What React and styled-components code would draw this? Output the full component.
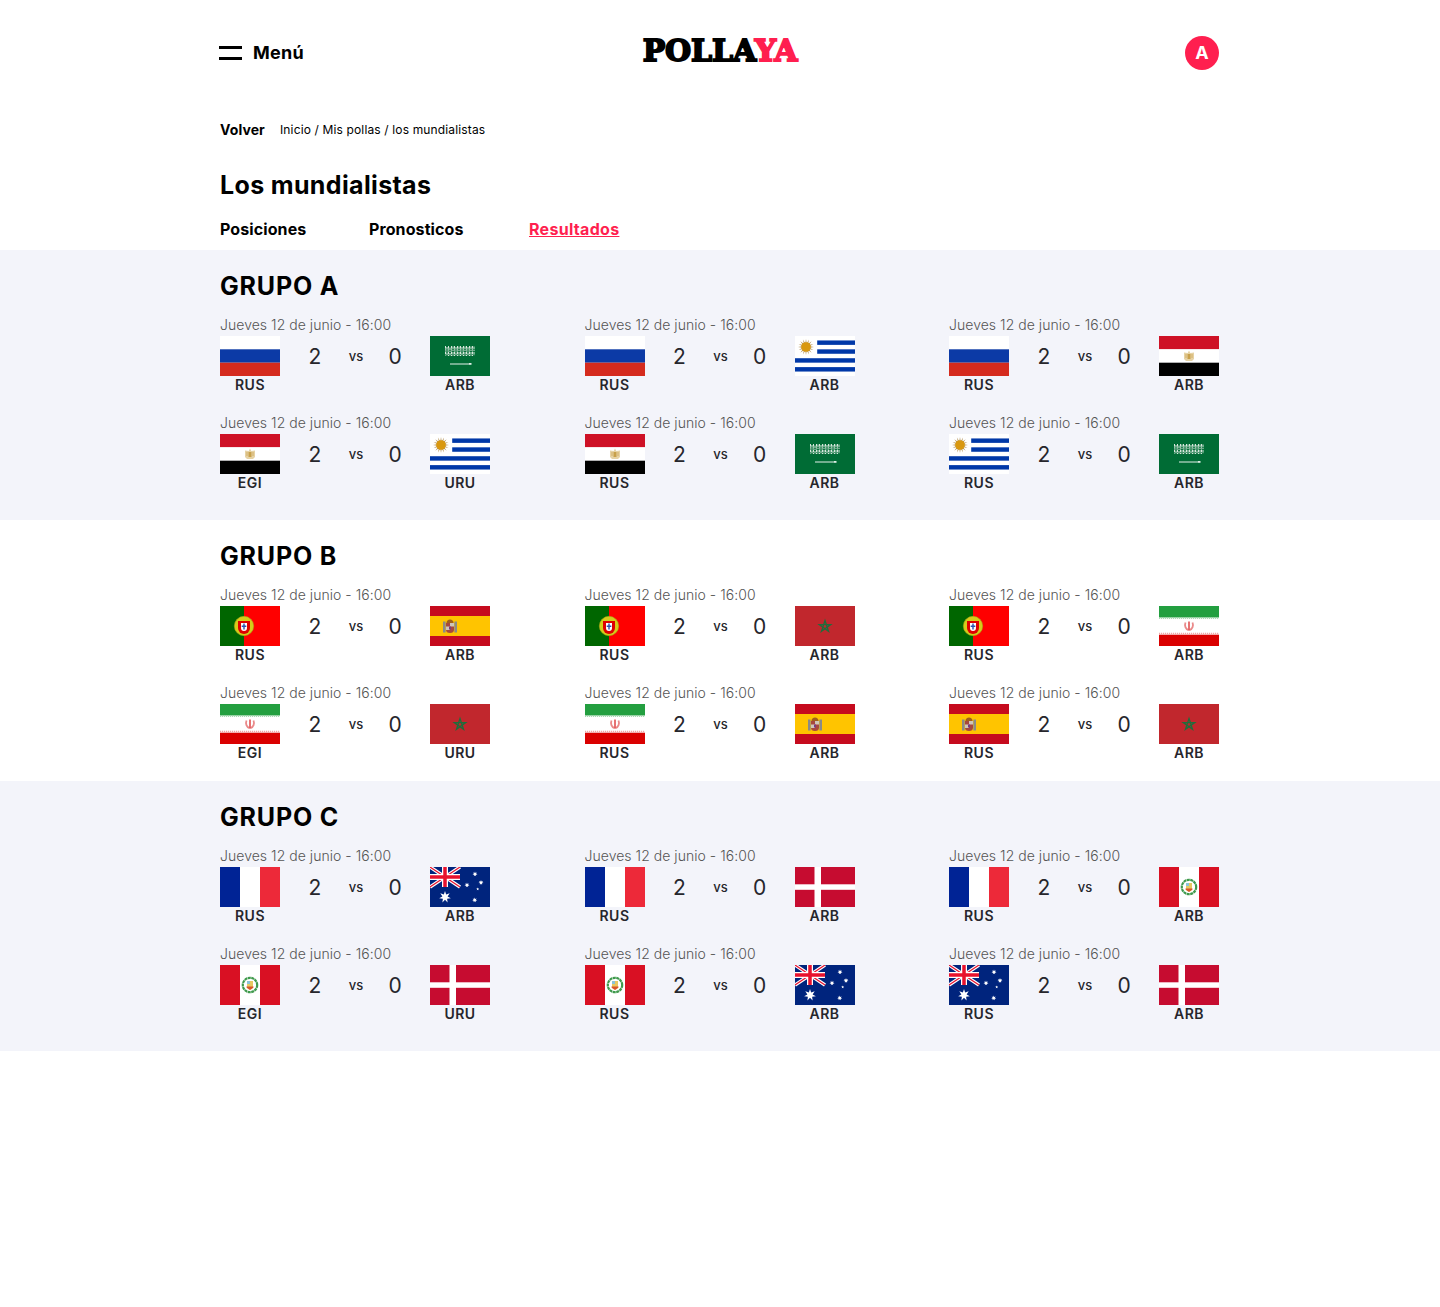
import React from "react";
import styled, { createGlobalStyle } from "styled-components";

const Global = createGlobalStyle`
  html, body { margin: 0; padding: 0; background: #fff; }
  body { font-family: Inter, "Liberation Sans", sans-serif; color: #000; min-height: 1307px; }
`;

const Container = styled.div`
  width: 999px;
  margin-left: 220px;
`;
const Header = styled.header`
  height: 106px;
  display: grid;
  grid-template-columns: 1fr auto 1fr;
  align-items: center;
`;
const MenuButton = styled.div`
  display: flex;
  align-items: center;
  gap: 11px;
  margin-left: -1px;
`;
const MenuLabel = styled.span`
  font-size: 18px;
  line-height: 22px;
  font-weight: 700;
  letter-spacing: 0.3px;
`;
const Burger = styled.span`
  width: 23px;
  height: 14px;
  border-top: 3px solid #000;
  border-bottom: 3px solid #000;
  box-sizing: border-box;
`;
const Logo = styled.div`
  font-family: "DejaVu Serif", "Liberation Serif", serif;
  font-weight: 700;
  font-size: 30px;
  line-height: 32px;
  letter-spacing: -0.1px;
  -webkit-text-stroke: 1.8px currentColor;
  margin-top: -4px;
  margin-left: 1px;
  color: #000;
`;
const LogoAccent = styled.span`
  color: #ff1f4f;
`;
const Avatar = styled.div`
  justify-self: end;
  width: 34px;
  height: 34px;
  border-radius: 50%;
  background: #ff1f4f;
  color: #fff;
  display: flex;
  align-items: center;
  justify-content: center;
  font-size: 18px;
  line-height: 32px;
  padding-bottom: 1px;
  box-sizing: border-box;
  font-weight: 700;
`;
const Crumbs = styled.div`
  display: flex;
  align-items: center;
  height: 20px;
  margin-top: 13px;
`;
const Back = styled.span`
  width: 60px;
  font-size: 14px;
  font-weight: 700;
  letter-spacing: 0.1px;
`;
const Trail = styled.span`
  font-size: 12px;
  font-weight: 400;
  letter-spacing: 0.14px;
`;
const PageTitle = styled.h1`
  margin: 31px 0 0;
  font-size: 25px;
  line-height: 30px;
  font-weight: 700;
  letter-spacing: 0.35px;
`;
const Tabs = styled.nav`
  display: grid;
  grid-template-columns: 149px 160px auto;
  justify-content: start;
  margin: 19px 0 11px;
`;
const Tab = styled.a`
  font-size: 16px;
  line-height: 20px;
  font-weight: 700;
  letter-spacing: ${(p) => (p.$active ? "0.3px" : "0.1px")};
  color: ${(p) => (p.$active ? "#ff1f4f" : "#000")};
  text-decoration: ${(p) => (p.$active ? "underline" : "none")};
`;
const Section = styled.section`
  background: ${(p) => (p.$tinted ? "#f3f4fa" : "#fff")};
  padding: 20px 0 ${(p) => (p.$tinted ? 28 : 19)}px;
`;
const GroupTitle = styled.h2`
  margin: 0 0 16px;
  font-size: 25px;
  line-height: 32px;
  height: 30px;
  font-weight: 700;
  letter-spacing: 0.8px;
`;
const MatchGrid = styled.div`
  display: grid;
  grid-template-columns: repeat(3, 270px);
  justify-content: space-between;
  row-gap: 20px;
`;
const MatchDate = styled.div`
  font-size: 14px;
  line-height: 18px;
  font-weight: 300;
  color: #555;
  margin-bottom: 2px;
  letter-spacing: 0.04px;
`;
const Teams = styled.div`
  display: flex;
  justify-content: space-between;
  align-items: flex-start;
`;
const Team = styled.div`
  width: 60px;
  display: flex;
  flex-direction: column;
  align-items: center;
`;
const FlagSvg = styled.svg`
  display: block;
  width: 60px;
  height: 40px;
`;
const Code = styled.div`
  font-size: 14px;
  line-height: 18px;
  font-weight: 600;
  letter-spacing: 0.5px;
  color: #26262c;
`;
const Scoreboard = styled.div`
  width: 150px;
  height: 40px;
  box-sizing: border-box;
  padding-left: 15px;
  display: flex;
  align-items: center;
`;
const Score = styled.span`
  width: 40px;
  text-align: center;
  font-size: 21px;
  font-weight: 400;
  color: #26262c;
`;
const Versus = styled.span`
  width: 38px;
  margin-left: 2px;
  text-align: center;
  font-size: 13px;
  font-weight: 500;
  color: #26262c;
`;

const Star = ({ cx, cy, r, fill = "#fff", n = 7, inner = 0.45 }) => {
  const pts = [];
  for (let i = 0; i < n * 2; i++) {
    const a = (Math.PI * i) / n - Math.PI / 2;
    const rad = i % 2 ? r * inner : r;
    pts.push(`${(cx + rad * Math.cos(a)).toFixed(2)},${(cy + rad * Math.sin(a)).toFixed(2)}`);
  }
  return <polygon points={pts.join(" ")} fill={fill} />;
};

const Pentagram = ({ cx, cy, r, stroke }) => {
  const pts = [];
  for (let i = 0; i < 5; i++) {
    const a = (Math.PI * 4 * i) / 5 - Math.PI / 2;
    pts.push(`${(cx + r * Math.cos(a)).toFixed(2)},${(cy + r * Math.sin(a)).toFixed(2)}`);
  }
  return <polygon points={pts.join(" ")} fill="none" stroke={stroke} strokeWidth="1.300" />;
};

const flags = {
  ru: (
    <>
      <rect width="60" height="40" fill="#fff" />
      <rect y="13.300" width="60" height="13.400" fill="#0c3aa6" />
      <rect y="26.700" width="60" height="13.300" fill="#d52b1e" />
    </>
  ),
  sa: (
    <>
      <rect width="60" height="40" fill="#006c35" />
      <path
        d="M15.500 10v9.500M17 11v9M18.500 10v10M20 11.500v8M21.500 10v10M23 10.500v9.500M24.500 10v10M26 11v9M27.500 10v10M29 10.500v9.500M30.500 10v10M32 11v9M33.500 10v10M35 10.500v9.500M36.500 10v10M38 11v9M39.500 10v10M41 10.500v9.500M42.500 10v10M44 10.500v9"
        stroke="#d9e8de"
        strokeWidth="1"
        strokeDasharray="2.700 0.600 1.300 0.900"
        fill="none"
      />
      <path d="M20 28H39" stroke="#fff" strokeWidth="0.900" />
      <path d="M39 27h2.500v1.800H39z" fill="#dfeee6" />
    </>
  ),
  uy: (
    <>
      <rect width="60" height="40" fill="#fff" />
      <rect x="22.200" y="4.440" width="37.800" height="4.440" fill="#0038a8" />
      <rect x="22.200" y="13.330" width="37.800" height="4.440" fill="#0038a8" />
      <rect y="22.220" width="60" height="4.440" fill="#0038a8" />
      <rect y="31.110" width="60" height="4.440" fill="#0038a8" />
      <Star cx={11} cy={11} r={8} fill="#b08d50" n={16} />
      <circle cx="11" cy="11" r="4.800" fill="#d9980f" />
    </>
  ),
  eg: (
    <>
      <rect width="60" height="13.300" fill="#ce1126" />
      <rect y="13.300" width="60" height="13.400" fill="#fff" />
      <rect y="26.700" width="60" height="13.300" fill="#000" />
      <path d="M30 14.500l1.300 2.500 3.700-.5V23l-2 2h-6l-2-2v-6.500l3.700.5z" fill="#e6d2a4" />
      <path d="M28.500 18h3v5h-3z" fill="#c8a04a" />
      <path d="M27 18v4M33 18v4" stroke="#c8a04a" strokeWidth="0.700" />
    </>
  ),
  pt: (
    <>
      <rect width="60" height="40" fill="#f00" />
      <rect width="24" height="40" fill="#060" />
      <circle cx="24" cy="20" r="9.700" fill="#d6cc1a" stroke="#a8a818" strokeWidth="0.600" />
      <path d="M18 15h12v7a6 6 0 0 1-12 0z" fill="#e00000" />
      <path d="M21 17h6v5a3 3 0 0 1-6 0z" fill="#fff" />
      <path d="M23.300 17.500h1.400v6h-1.400zM21.700 19.500h4.600v1.400h-4.600z" fill="#2d4fb0" />
    </>
  ),
  es: (
    <>
      <rect width="60" height="40" fill="#c60b1e" />
      <rect y="10" width="60" height="20" fill="#ffc400" />
      <rect x="13" y="15.500" width="2.600" height="11" fill="#8a8a88" />
      <rect x="24.400" y="15.500" width="2.600" height="11" fill="#8a8a88" />
      <path d="M16.500 17c0-2 1.500-3.500 3.500-3.500s3.500 1.500 3.500 3.500z" fill="#a0601c" />
      <path d="M16 17h8v6.500a4 3.500 0 0 1-8 0z" fill="#a8483c" />
      <path d="M20 17h4v3.500h-4zM16 20.500h4v3.500h-4z" fill="#cfc6b8" />
      <path d="M19 20.500h2v3h-2z" fill="#7a3a80" />
    </>
  ),
  ma: (
    <>
      <rect width="60" height="40" fill="#c1272d" />
      <Pentagram cx={30} cy={20.500} r={6} stroke="#1f6d3c" />
    </>
  ),
  ir: (
    <>
      <rect width="60" height="40" fill="#fff" />
      <rect width="60" height="11.500" fill="#239f40" />
      <rect y="28.700" width="60" height="11.300" fill="#da0000" />
      <path d="M0 12.300h60" stroke="#a9d8b4" strokeWidth="1.600" strokeDasharray="1.200 0.800" />
      <path d="M0 27.700h60" stroke="#f0a6a6" strokeWidth="1.800" strokeDasharray="1.200 0.800" />
      <path d="M26.500 16.500c-1.200 3 0 6.800 3 7.500M33.500 16.500c1.200 3 0 6.800-3 7.500" stroke="#ea8a8a" strokeWidth="1.800" fill="none" />
      <path d="M30 15.500v9" stroke="#e05050" strokeWidth="1.600" />
    </>
  ),
  fr: (
    <>
      <rect width="20" height="40" fill="#002395" />
      <rect x="20" width="20" height="40" fill="#fff" />
      <rect x="40" width="20" height="40" fill="#ed2939" />
    </>
  ),
  au: (
    <>
      <rect width="60" height="40" fill="#00247d" />
      <path d="M0 0l30 20M30 0L0 20" stroke="#fff" strokeWidth="3.500" />
      <path d="M0 0l30 20M30 0L0 20" stroke="#e8112d" strokeWidth="1.200" />
      <path d="M15 0v20M0 10h30" stroke="#fff" strokeWidth="6" />
      <path d="M15 0v20M0 10h30" stroke="#e8112d" strokeWidth="3.500" />
      <Star cx={15} cy={30} r={6} />
      <Star cx={45} cy={7} r={2.600} />
      <Star cx={37} cy={18} r={2.600} />
      <Star cx={51} cy={15.500} r={2.600} />
      <Star cx={47.700} cy={22} r={1.500} n={5} />
      <Star cx={44.700} cy={33} r={2.600} />
    </>
  ),
  dk: (
    <>
      <rect width="60" height="40" fill="#c60c30" />
      <rect x="19.500" width="6.500" height="40" fill="#fff" />
      <rect y="17.300" width="60" height="5.500" fill="#fff" />
    </>
  ),
  pe: (
    <>
      <rect width="60" height="40" fill="#d91023" />
      <rect x="20" width="20" height="40" fill="#fff" />
      <circle cx="30" cy="20" r="7.200" fill="none" stroke="#3f9a4c" strokeWidth="2.200" strokeDasharray="3 0.500" />
      <path d="M27 16h6v5.500a3 3 0 0 1-6 0z" fill="#e8c860" />
      <path d="M27 16h3v3h-3z" fill="#8ac4d8" />
      <path d="M26.500 21.500h7v1l-3.500 2.500-3.500-2.500z" fill="#d8552a" />
    </>
  ),
};

const Flag = ({ name }) => <FlagSvg viewBox="0 0 60 40">{flags[name]}</FlagSvg>;

const Match = ({ home, homeCode, away, awayCode }) => (
  <div>
    <MatchDate>Jueves 12 de junio - 16:00</MatchDate>
    <Teams>
      <Team>
        <Flag name={home} />
        <Code>{homeCode}</Code>
      </Team>
      <Scoreboard>
        <Score>2</Score>
        <Versus>vs</Versus>
        <Score>0</Score>
      </Scoreboard>
      <Team>
        <Flag name={away} />
        <Code>{awayCode}</Code>
      </Team>
    </Teams>
  </div>
);

const groups = [
  {
    name: "GRUPO A",
    tinted: true,
    matches: [
      ["ru", "RUS", "sa", "ARB"],
      ["ru", "RUS", "uy", "ARB"],
      ["ru", "RUS", "eg", "ARB"],
      ["eg", "EGI", "uy", "URU"],
      ["eg", "RUS", "sa", "ARB"],
      ["uy", "RUS", "sa", "ARB"],
    ],
  },
  {
    name: "GRUPO B",
    tinted: false,
    matches: [
      ["pt", "RUS", "es", "ARB"],
      ["pt", "RUS", "ma", "ARB"],
      ["pt", "RUS", "ir", "ARB"],
      ["ir", "EGI", "ma", "URU"],
      ["ir", "RUS", "es", "ARB"],
      ["es", "RUS", "ma", "ARB"],
    ],
  },
  {
    name: "GRUPO C",
    tinted: true,
    matches: [
      ["fr", "RUS", "au", "ARB"],
      ["fr", "RUS", "dk", "ARB"],
      ["fr", "RUS", "pe", "ARB"],
      ["pe", "EGI", "dk", "URU"],
      ["pe", "RUS", "au", "ARB"],
      ["au", "RUS", "dk", "ARB"],
    ],
  },
];

export default function App() {
  return (
    <>
      <Global />
      <Container>
        <Header>
          <MenuButton>
            <Burger />
            <MenuLabel>Menú</MenuLabel>
          </MenuButton>
          <Logo>
            POLLA<LogoAccent>YA</LogoAccent>
          </Logo>
          <Avatar>A</Avatar>
        </Header>
        <Crumbs>
          <Back>Volver</Back>
          <Trail>Inicio / Mis pollas / los mundialistas</Trail>
        </Crumbs>
        <PageTitle>Los mundialistas</PageTitle>
        <Tabs>
          <Tab>Posiciones</Tab>
          <Tab>Pronosticos</Tab>
          <Tab $active>Resultados</Tab>
        </Tabs>
      </Container>
      {groups.map((g) => (
        <Section key={g.name} $tinted={g.tinted}>
          <Container>
            <GroupTitle>{g.name}</GroupTitle>
            <MatchGrid>
              {g.matches.map((m, i) => (
                <Match key={i} home={m[0]} homeCode={m[1]} away={m[2]} awayCode={m[3]} />
              ))}
            </MatchGrid>
          </Container>
        </Section>
      ))}
    </>
  );
}
